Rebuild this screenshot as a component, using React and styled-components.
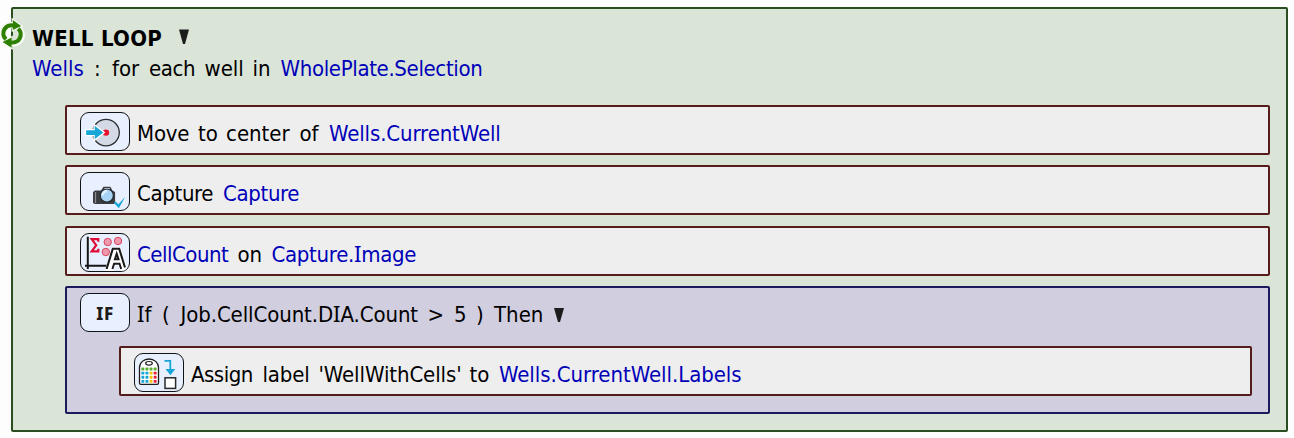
import React from "react";
import styled, { createGlobalStyle } from "styled-components";

const GlobalStyle = createGlobalStyle`
  * { box-sizing: border-box; }
  body { margin: 0; background: #fdfdfd; }
`;

const Page = styled.main`
  width: 1294px;
  height: 438px;
  padding: 7px 6px 6px 11px;
  font-family: "DejaVu Sans Condensed", "DejaVu Sans", sans-serif;
  font-stretch: condensed;
  font-size: 22px;
  line-height: 30px;
  color: #000;
  white-space: nowrap;
`;

const LoopBlock = styled.section`
  position: relative;
  height: 425px;
  border: 2px solid #2a4e20;
  border-radius: 2px;
  background: #dae5d8;
  padding: 15px 16px 0 19px;
`;

const LoopBadge = styled.svg`
  position: absolute;
  left: -13px;
  top: 7px;
  width: 28px;
  height: 36px;
`;

const Line = styled.div`
  display: flex;
  align-items: center;
  height: 30px;
`;

const Title = styled.h1`
  margin: 0;
  font-size: 22px;
  line-height: 30px;
  font-weight: 700;
  letter-spacing: 0.3px;
  width: 147px;
`;

const Steps = styled.div`
  display: flex;
  flex-direction: column;
  gap: 10px;
  margin: 21px 0 0 33px;
`;

const Step = styled.div`
  display: flex;
  align-items: flex-start;
  height: 50px;
  border: 2px solid #561c1c;
  border-radius: 2px;
  background: #eeeeee;
  padding: 5px 0 0 13px;
  margin-top: ${(p) => p.$shift || 0}px;
`;

const Condition = styled.div`
  height: 128px;
  border: 2px solid #1a1a5c;
  border-radius: 2px;
  background: #d0cedf;
  padding: 5px 16px 0 13px;
`;

const ConditionHead = styled.div`
  display: flex;
  align-items: flex-start;
  height: 53px;
`;

const Nested = styled.div`
  margin-left: 39px;
`;

const IconTile = styled.span`
  flex: none;
  display: flex;
  align-items: center;
  justify-content: center;
  width: 50px;
  height: 39px;
  margin-right: 7px;
  border: 1px solid #101418;
  border-radius: 9px;
  background: #e8f0ff;
  overflow: hidden;

  svg { flex: none; width: 50px; height: 39px; }
`;

const IfGlyph = styled.b`
  font-family: "Noto Sans", sans-serif;
  font-stretch: normal;
  font-weight: 800;
  font-size: 17px;
  line-height: 20px;
  letter-spacing: 0.5px;
  color: #1c1c1c;
  padding-top: 2px;
`;

const Sentence = styled.div`
  display: flex;
  height: 30px;
  padding-top: 7px;
`;

const Word = styled.span`
  flex: none;
  width: ${(p) => p.$w}px;
  letter-spacing: ${(p) => p.$ls || 0}px;
  color: ${(p) => (p.$link ? "#0000b8" : "inherit")};
`;

const SerifI = styled.span`
  font-family: "Noto Sans", sans-serif;
  font-stretch: normal;
  line-height: 1;
`;

const Caret = styled.svg`
  flex: none;
  width: ${(p) => p.$w}px;
  height: ${(p) => p.$h}px;
  margin-top: ${(p) => p.$mt || 0}px;
  fill: #1c1c1c;
`;

function Text({ children, ...rest }) {
  const parts = children.split("I");
  return (
    <Word {...rest}>
      {parts.map((part, i) => (
        <React.Fragment key={i}>
          {i > 0 && <SerifI>I</SerifI>}
          {part}
        </React.Fragment>
      ))}
    </Word>
  );
}

const MoveIcon = () => (
  <svg viewBox="0 0 50 39">
    <circle cx="26" cy="20.6" r="13.3" fill="#d3dae6" stroke="#2b2f33" strokeWidth="1.3" />
    <circle cx="26" cy="20.6" r="3.2" fill="#e8102c" />
    <path d="M5.500 17.600h8.600v-5l10.200 8-10.200 8v-5H5.500z" fill="#18a5d8" stroke="#fff" strokeWidth="1.3" />
  </svg>
);

const CameraIcon = () => (
  <svg viewBox="0 0 50 39">
    <path d="M13 20l2-1.5h6l2.500-3.700h6.800l2.200 3.700 2.600 1.500v11L34 32H15l-2-1z" fill="#3a3c40" />
    <path d="M24.800 16h4.600l.8 1.500h-6.400z" fill="#e6ebf2" />
    <path d="M15.500 20v11" stroke="#8a8c90" strokeWidth="1.200" />
    <circle cx="26.800" cy="23.600" r="6.600" fill="#a8d4f3" stroke="#24272b" strokeWidth="1.200" />
    <path d="M22.800 23.200a4.200 4.200 0 0 1 4-4" fill="none" stroke="#e4f4ff" strokeWidth="2.200" />
    <path d="M33.800 30.800l1.800-1.200 2.800 2.700 6.800-7.600-6.300 11.500z" fill="#18a5d8" />
  </svg>
);

const CountIcon = () => (
  <svg viewBox="0 0 50 39">
    <path d="M7.800 3.700V36M5 32.800h23" fill="none" stroke="#161616" strokeWidth="2" />
    <path d="M18.300 8.800V6.200h-6.600l4.500 6-4.500 6.200h6.600v-2.600" fill="none" stroke="#e00c38" strokeWidth="2.200" />
    <g fill="#ed9aad" stroke="#d9425f" strokeWidth="1">
      <circle cx="27.700" cy="9" r="3.700" />
      <circle cx="38" cy="8" r="3.700" />
      <circle cx="25.800" cy="19" r="3.700" />
    </g>
    <path d="M27 36.500l6-21h6.200l6.400 20.500h-4.300l-1.600-5.200h-5.800l-1.800 5.700z" fill="#fff" stroke="#fff" strokeWidth="3.400" />
    <path d="M26.600 36l6.200-20.300h6.400L45 34.500" fill="none" stroke="#1a1a1a" strokeWidth="2.100" />
    <path d="M32.400 36l1.700-5.200h5.400l1.700 5.200M34.900 26.300l1.800-5.600 1.800 5.600z" fill="none" stroke="#1a1a1a" strokeWidth="2" />
  </svg>
);

const DOT_COLORS = [
  ["#5cae32", "#5cae32", "#5cae32", "#5cae32"],
  ["#18a5d8", "#18a5d8", "#f5c400", "#e8243c"],
  ["#18a5d8", "#18a5d8", "#f5c400", "#e8243c"],
  ["#18a5d8", "#18a5d8", "#f5c400", "#e8243c"],
];

const LabelIcon = () => (
  <svg viewBox="0 0 50 39">
    <path d="M5.500 30V14.500C5.500 9.500 10 6 15 6s9.500 3.500 9.500 8.500V30q0 1.300-1.300 1.300H6.800Q5.500 31.300 5.500 30z" fill="#fff" stroke="#1c1c1c" strokeWidth="1.300" />
    <ellipse cx="15" cy="10.300" rx="3.300" ry="1.800" fill="#fff" stroke="#1c1c1c" strokeWidth="1.200" />
    {DOT_COLORS.map((row, y) =>
      row.map((color, x) => (
        <rect key={`${x}-${y}`} x={7.4 + x * 4.1} y={14.6 + y * 4.1} width="2.9" height="2.9" rx="0.6" fill={color} />
      ))
    )}
    <path d="M30.500 7.800h5.800V17" fill="none" stroke="#18a5d8" strokeWidth="1.800" />
    <path d="M31.500 16h9.800L36.400 22.300z" fill="#18a5d8" />
    <rect x="31" y="24.800" width="10.600" height="10.600" fill="#fff" stroke="#2a2a2a" strokeWidth="1.500" />
  </svg>
);

export default function App() {
  return (
    <>
      <GlobalStyle />
      <Page>
        <LoopBlock>
          <LoopBadge viewBox="0 16 28 36">
            <g fill="none" stroke="#f6faf4" strokeWidth="6.500">
              <path d="M5.500 39A8 8 0 0 1 13.500 25.500M18.700 29a8 8 0 0 1-7.700 13.800" />
            </g>
            <g fill="#2e8000" stroke="#f6faf4" strokeWidth="2.400" paintOrder="stroke">
              <path d="M12.800 20l8.400 6-8.400 4zM11.600 37.500l-9 4.500 9 5.800z" />
            </g>
            <g fill="none" stroke="#2e8000" strokeWidth="4.200">
              <path d="M6 39.300A8 8 0 0 1 14 25.800M18.200 28.700a8 8 0 0 1-7.200 13.600" />
            </g>
          </LoopBadge>

          <Line>
            <Title>WELL LOOP</Title>
            <Caret viewBox="0 0 10 15" $w={10} $h={15} $mt={-5}>
              <path d="M0 .5h10L6 15H4z" />
            </Caret>
          </Line>
          <Line>
            <Text $w={62} $link>Wells</Text>
            <Text $w={18}>:</Text>
            <Text $w={37}>for</Text>
            <Text $w={55.5} $ls={-0.4}>each</Text>
            <Text $w={48}>well</Text>
            <Text $w={28}>in</Text>
            <Text $w={210} $ls={-0.35} $link>WholePlate.Selection</Text>
          </Line>

          <Steps>
            <Step>
              <IconTile><MoveIcon /></IconTile>
              <Sentence>
                <Text $w={61} $ls={-0.2}>Move</Text>
                <Text $w={28}>to</Text>
                <Text $w={73.5}>center</Text>
                <Text $w={29.5}>of</Text>
                <Text $w={180} $ls={-0.12} $link>Wells.CurrentWell</Text>
              </Sentence>
            </Step>
            <Step>
              <IconTile><CameraIcon /></IconTile>
              <Sentence>
                <Text $w={86} $ls={-0.35}>Capture</Text>
                <Text $w={90} $ls={-0.35} $link>Capture</Text>
              </Sentence>
            </Step>
            <Step $shift={1}>
              <IconTile><CountIcon /></IconTile>
              <Sentence>
                <Text $w={100.5} $ls={-0.5} $link>CellCount</Text>
                <Text $w={34}>on</Text>
                <Text $w={160} $ls={-0.3} $link>Capture.Image</Text>
              </Sentence>
            </Step>
            <Condition>
              <ConditionHead>
                <IconTile><IfGlyph>IF</IfGlyph></IconTile>
                <Sentence>
                  <Text $w={25}>If</Text>
                  <Text $w={18.5}>(</Text>
                  <Text $w={247} $ls={-0.1}>Job.CellCount.DIA.Count</Text>
                  <Text $w={26.5}>&gt;</Text>
                  <Text $w={22}>5</Text>
                  <Text $w={18}>)</Text>
                  <Text $w={60}>Then</Text>
                  <Caret viewBox="0 0 10 14" $w={10} $h={14} $mt={8}>
                    <path d="M0 0h10L6 14H4z" />
                  </Caret>
                </Sentence>
              </ConditionHead>
              <Nested>
                <Step>
                  <IconTile><LabelIcon /></IconTile>
                  <Sentence>
                    <Text $w={71.5} $ls={-0.5}>Assign</Text>
                    <Text $w={56} $ls={-0.15}>label</Text>
                    <Text $w={151} $ls={-0.1}>'WellWithCells'</Text>
                    <Text $w={29.5}>to</Text>
                    <Text $w={246} $ls={-0.05} $link>Wells.CurrentWell.Labels</Text>
                  </Sentence>
                </Step>
              </Nested>
            </Condition>
          </Steps>
        </LoopBlock>
      </Page>
    </>
  );
}
